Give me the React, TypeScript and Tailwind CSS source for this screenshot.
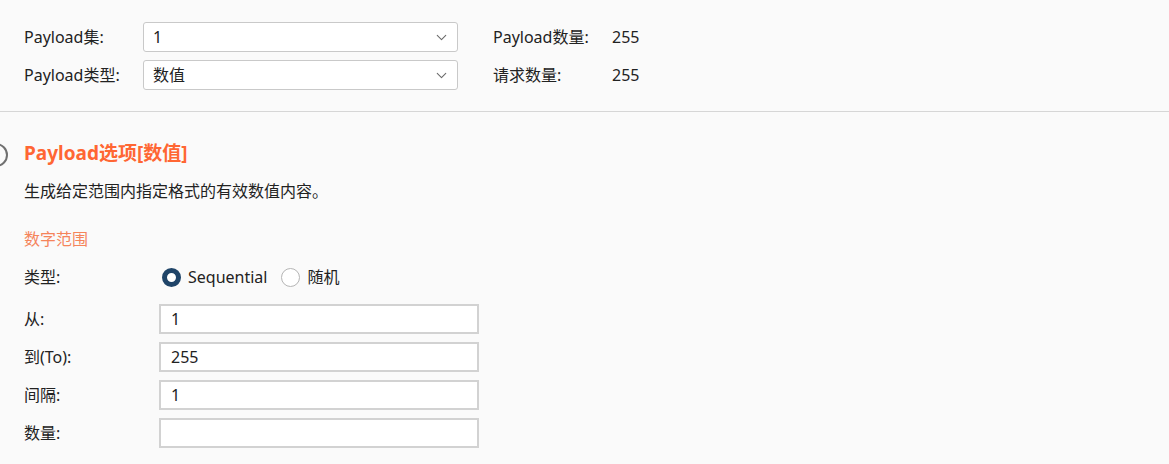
import { ChevronDown } from 'lucide-react'

const font = { fontFamily: '"Noto Sans", "Noto Sans CJK SC", sans-serif' }

function Select({ value }: { value: string }) {
  return (
    <div className="w-[315px] h-[30px] bg-white border border-[#c9c9c9] rounded-[3px] flex items-center justify-between pl-[9px] pr-[7px]">
      <span>{value}</span>
      <ChevronDown className="w-[17px] h-[17px] text-[#6b6b6b]" strokeWidth={1.5} />
    </div>
  )
}

function Field({ label, value }: { label: string; value: string }) {
  return (
    <div className="flex items-center h-[29px]">
      <span className="w-[135px]">{label}</span>
      <div className="w-[320px] h-[30px] bg-white border-2 border-[#d2d2d2] flex items-center px-[10px]">{value}</div>
    </div>
  )
}

export default function App() {
  return (
    <div className="w-[1169px] h-[464px] bg-[#fafafa] text-[16px] text-[#222] overflow-hidden relative" style={font}>
      <div className="absolute left-[-16px] top-[143px] w-[24px] h-[24px] rounded-full border-[2.5px] border-[#707070]" />

      <div className="pt-[22px] pb-[21px] pl-[24px] flex border-b border-[#d6d6d6]">
        <div className="flex flex-col gap-[8px]">
          <div className="flex items-center">
            <span className="w-[119px]">Payload集:</span>
            <Select value="1" />
          </div>
          <div className="flex items-center">
            <span className="w-[119px]">Payload类型:</span>
            <Select value="数值" />
          </div>
        </div>
        <div className="flex flex-col gap-[8px] ml-[35px]">
          <div className="flex items-center h-[30px]">
            <span className="w-[119px]">Payload数量:</span>
            <span>255</span>
          </div>
          <div className="flex items-center h-[30px]">
            <span className="w-[119px]">请求数量:</span>
            <span>255</span>
          </div>
        </div>
      </div>

      <div className="pl-[24px] pt-[29px]">
        <h2 className="text-[19px] font-bold text-[#ff6633] leading-[24px]">Payload选项[数值]</h2>
        <p className="mt-[15px] leading-[22px]">生成给定范围内指定格式的有效数值内容。</p>
        <p className="mt-[26px] leading-[22px] text-[#f5845a]">数字范围</p>

        <div className="mt-[16px] flex items-center h-[22px]">
          <span className="w-[138px]">类型:</span>
          <span className="w-[19px] h-[19px] rounded-full border-[5px] border-[#1f4468] bg-white" />
          <span className="ml-[7px]">Sequential</span>
          <span className="ml-[14px] w-[19px] h-[19px] rounded-full border border-[#b5b5b5] bg-white" />
          <span className="ml-[7px]">随机</span>
        </div>

        <div className="mt-[16px] flex flex-col gap-[9px]">
          <Field label="从:" value="1" />
          <Field label="到(To):" value="255" />
          <Field label="间隔:" value="1" />
          <Field label="数量:" value="" />
        </div>
      </div>
    </div>
  )
}
